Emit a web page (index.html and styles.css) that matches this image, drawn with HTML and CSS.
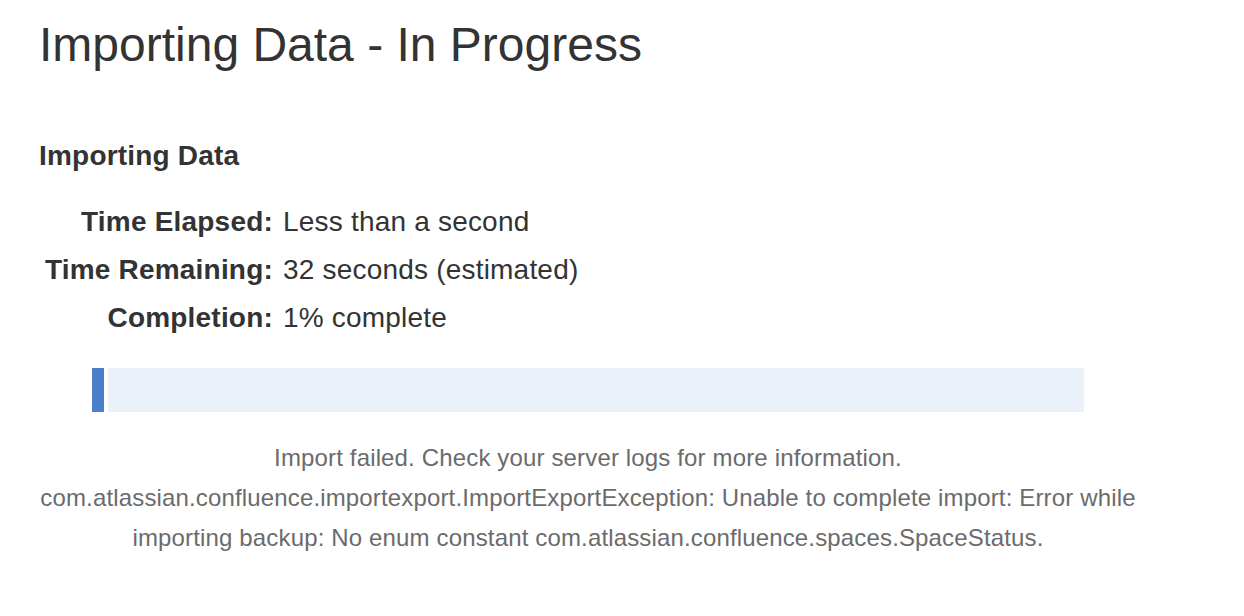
FILE: index.html
```html
<!DOCTYPE html>
<html>
<head>
<meta charset="utf-8">
<link rel="stylesheet" href="styles.css">
</head>
<body>
<div class="page">
  <h1 class="title">Importing Data - In Progress</h1>
  <h2 class="subtitle">Importing Data</h2>
  <div class="stats">
    <div class="label">Time Elapsed:</div><div class="value">Less than a second</div>
    <div class="label">Time Remaining:</div><div class="value">32 seconds (estimated)</div>
    <div class="label">Completion:</div><div class="value">1% complete</div>
  </div>
  <div class="progress">
    <div class="fill" style="width: 12px"></div>
    <div class="track"></div>
  </div>
  <div class="message">
    <p>Import failed. Check your server logs for more information.</p>
    <p>com.atlassian.confluence.importexport.ImportExportException: Unable to complete import: Error while importing backup: No enum constant com.atlassian.confluence.spaces.SpaceStatus.</p>
  </div>
</div>
</body>
</html>
```
FILE: styles.css
```css
html, body {
  margin: 0;
  padding: 0;
  background: #fff;
}
body {
  font-family: "Liberation Sans", Arial, Helvetica, sans-serif;
  color: #333;
}
.page {
  width: 1098px;
  padding: 17px 0 0 39px;
}
.title {
  margin: 0;
  font-size: 48px;
  font-weight: normal;
  line-height: 56px;
  color: #333;
}
.subtitle {
  margin: 67px 0 0 0;
  font-size: 28px;
  font-weight: bold;
  line-height: 32px;
  letter-spacing: 0.2px;
}
.stats {
  display: grid;
  grid-template-columns: 234px auto;
  column-gap: 10px;
  margin-top: 26px;
  font-size: 28px;
  line-height: 48px;
  letter-spacing: 0.2px;
}
.label {
  font-weight: bold;
  text-align: right;
}
.progress {
  display: flex;
  gap: 4px;
  width: 992px;
  height: 44px;
  margin: 26px auto 0 auto;
}
.fill {
  background: #4a80c9;
}
.track {
  flex: 1;
  background: #eaf1f9;
}
.message {
  margin-top: 26px;
  text-align: center;
  font-size: 24px;
  line-height: 40px;
  letter-spacing: 0.15px;
  color: #6b6b6b;
}
.message p {
  margin: 0;
}
```
